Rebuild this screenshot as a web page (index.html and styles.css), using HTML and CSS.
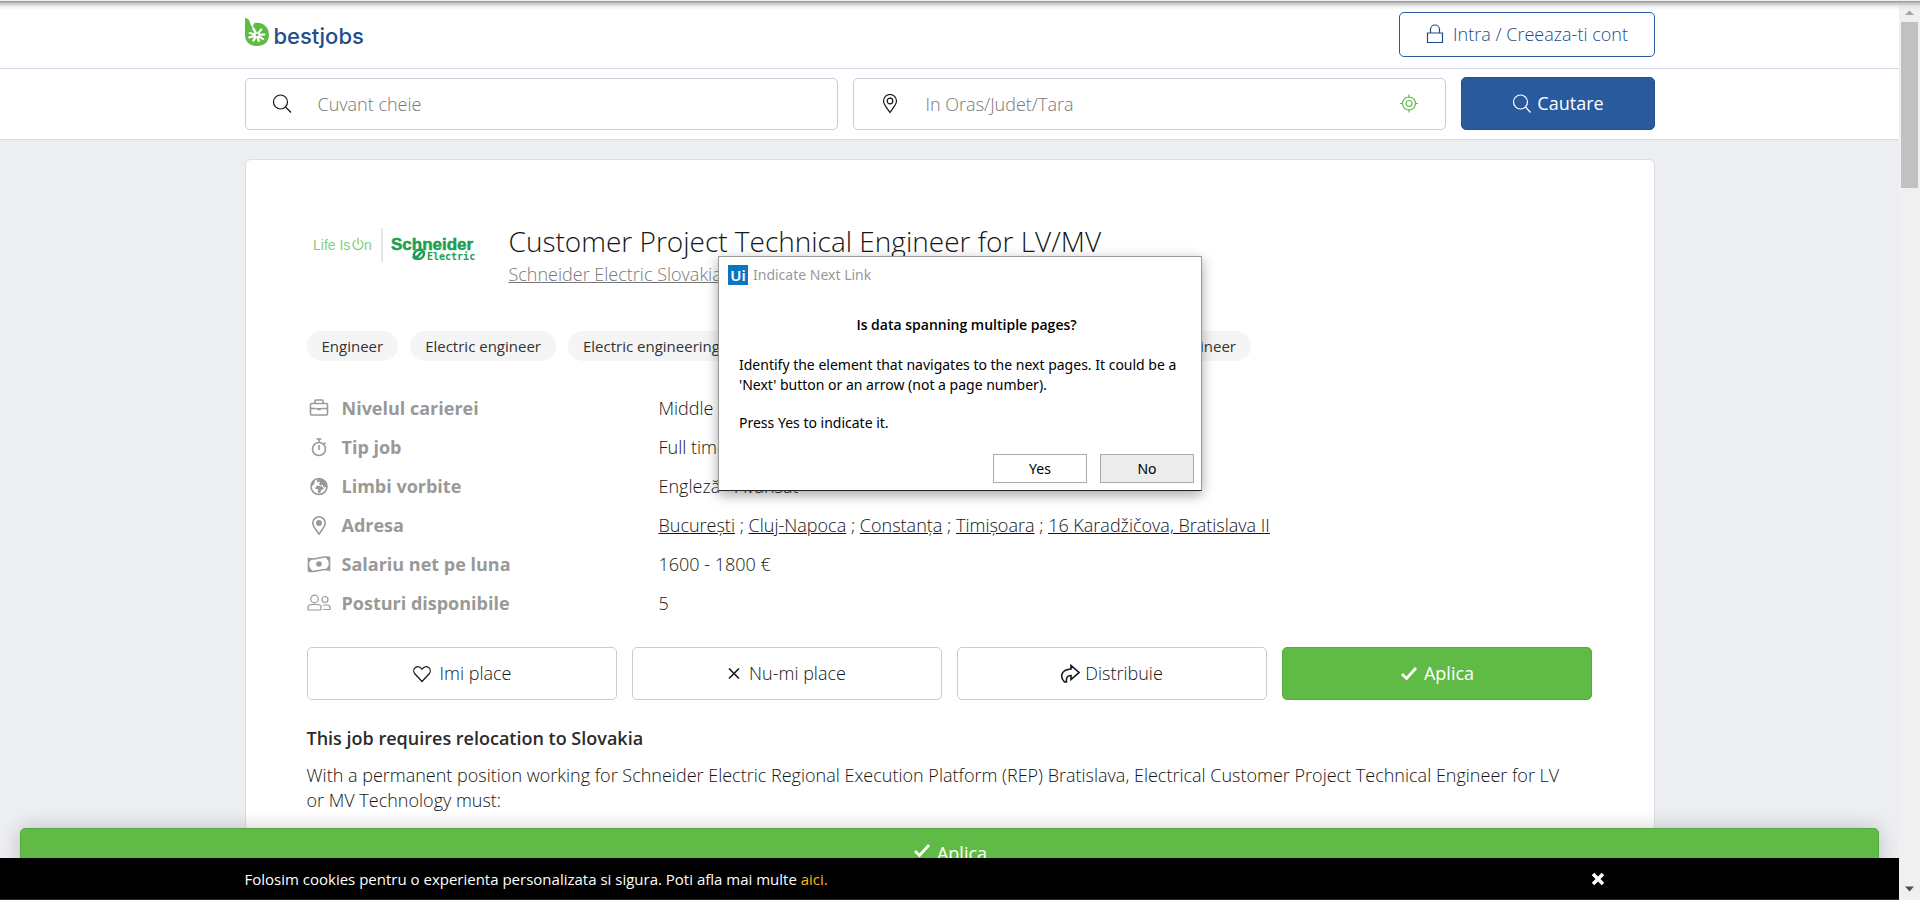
FILE: index.html
```html
<!DOCTYPE html>
<html lang="ro">
<head>
<meta charset="utf-8">
<meta name="viewport" content="width=device-width, initial-scale=1">
<title>Customer Project Technical Engineer for LV/MV - bestjobs</title>
<link rel="stylesheet" href="styles.css">
</head>
<body>
<div class="window">
  <div class="page">
    <header class="header">
      <div class="container header-row">
        <a class="brand" href="#" aria-label="bestjobs">
          <svg class="brand-mark" viewBox="0 0 20 28" preserveAspectRatio="none" aria-hidden="true">
            <path d="M0 0C3 .5 4 3 4.500 6L7.500 12C6.500 9 6.500 6.500 8 5C15 3.500 20 9 20 17C20 24 16 28 10 28C4 28 0 24 0 17Z" fill="#5fbb46"/>
            <g stroke="#fff" stroke-width="2" stroke-linecap="round">
              <path d="M10 17L7 10.500M10 17L13.500 11.500M10 17L16 16.500M10 17L15 21M10 17L11.500 23M10 17L7 22.500M10 17L3.500 19.500M10 17L4 15"/>
            </g>
            <circle cx="10" cy="17" r="1.200" fill="#5fbb46"/>
          </svg>
          <span class="brand-name">bestjobs</span>
        </a>
        <a class="login" href="#">
          <svg class="icon" viewBox="0 0 20 20" aria-hidden="true"><path d="M2.500 9h15v9.500h-15z M5.500 9V5.500a4.500 4.500 0 0 1 9 0V9"/></svg>
          <span>Intra / Creeaza-ti cont</span>
        </a>
      </div>
    </header>

    <form class="search">
      <div class="container search-row">
        <label class="field">
          <svg class="icon" viewBox="0 0 20 20" aria-hidden="true"><circle cx="8.500" cy="8" r="7"/><path d="M13.500 13L19 18.500"/></svg>
          <input type="text" placeholder="Cuvant cheie" aria-label="Cuvant cheie">
        </label>
        <label class="field">
          <svg class="icon" viewBox="0 0 20 20" aria-hidden="true"><path d="M10 18.500C7 14 3.500 10.500 3.500 7a6.500 6.500 0 0 1 13 0C16.500 10.500 13 14 10 18.500z"/><circle cx="10" cy="7" r="2.800"/></svg>
          <input type="text" placeholder="In Oras/Judet/Tara" aria-label="In Oras/Judet/Tara">
          <svg class="icon locate" viewBox="0 0 20 20" aria-hidden="true"><circle cx="10" cy="9.500" r="6.500"/><circle cx="10" cy="9.500" r="3"/><path d="M10 .5v3M10 15.500v3M1 9.500h3M16 9.500h3"/></svg>
        </label>
        <button class="search-btn" type="button">
          <svg class="icon" viewBox="0 0 20 20" aria-hidden="true"><circle cx="9.500" cy="8" r="7"/><path d="M14.500 13L19.500 18.500"/></svg>
          <span>Cautare</span>
        </button>
      </div>
    </form>

    <main class="container card">
      <div class="job-head">
        <svg class="company-logo" viewBox="0 0 170 40" role="img" aria-label="Life Is On | Schneider Electric">
          <text x="0" y="22" class="logo-life">Life Is</text>
          <path d="M42.500 12.200a5 5 0 1 0 5 0M45 9.500v7" fill="none" stroke="#7fd07f" stroke-width="1.300"/>
          <text x="51" y="22" class="logo-life">n</text>
          <path d="M69 0v34" stroke="#dedede" stroke-width="1.500"/>
          <text x="78" y="22" class="logo-name">Schneider</text>
          <text x="114" y="32" class="logo-sub">Electric</text>
          <g fill="none" stroke="#1d9d50" stroke-width="2.400"><path d="M110 22c-5-1-8 1-9 4s3 4 5 1 5-5 5-2-2 6-5 6-5 0-6-3"/></g>
        </svg>
        <div>
          <h1 class="job-title">Customer Project Technical Engineer for LV/MV</h1>
          <a class="company" href="#">Schneider Electric Slovakia</a>
        </div>
      </div>

      <ul class="tags">
        <li>Engineer</li>
        <li>Electric engineer</li>
        <li>Electric engineering</li>
        <li>Technical engineer</li>
        <li>Project engineer</li>
        <li>Mechanical engineer</li>
      </ul>

      <dl class="facts">
        <dt><svg class="icon fact-icon" viewBox="0 0 24 20" aria-hidden="true"><rect x="3.500" y="4.500" width="17" height="11.500" rx="1"/><path d="M8 4V2q0-1 1-1h6q1 0 1 1v2M3.500 9.500h6M14.500 9.500h6"/><path d="M9.500 9h5v1.500l-2.500 1-2.500-1z" fill="currentColor" stroke="none"/></svg>Nivelul carierei</dt>
        <dd>Middle</dd>
        <dt><svg class="icon fact-icon" viewBox="0 0 24 20" aria-hidden="true"><circle cx="12" cy="11" r="6.500"/><path d="M12 7v5M9.500 1h5M12 1v4M17 4.500l1.500 1.500"/></svg>Tip job</dt>
        <dd>Full time</dd>
        <dt><svg class="icon fact-icon" viewBox="0 0 24 20" aria-hidden="true"><circle cx="12" cy="9.500" r="8"/><path d="M10 2.500l4-1 4 3 2 5-2 1-2-1 0-2-2 1-2-1 1-3-3 1zM10 8.500l5 1 2 2-3 2-1 3-2-1 0-3-3-1zM5 4.500l3-1-1 4-3 2z" fill="currentColor" stroke="none"/></svg>Limbi vorbite</dt>
        <dd>Engleză - Avansat</dd>
        <dt><svg class="icon fact-icon" viewBox="0 0 24 20" aria-hidden="true"><path d="M12 18C9 13.500 5.800 10.500 5.800 7a6.200 6.200 0 0 1 12.400 0C18.200 10.500 15 13.500 12 18z"/><circle cx="12" cy="7" r="3" fill="currentColor" stroke="none"/></svg>Adresa</dt>
        <dd><a href="#">București</a> ; <a href="#">Cluj-Napoca</a> ; <a href="#">Constanța</a> ; <a href="#">Timișoara</a> ; <a href="#">16 Karadžičova, Bratislava II</a></dd>
        <dt><svg class="icon fact-icon" viewBox="0 0 24 20" aria-hidden="true"><path d="M1.500 3.500c7 2.500 14-3.500 21-1v12.500c-7-2.500-14 3.500-21 1z"/><circle cx="12" cy="9" r="2.800" fill="currentColor" stroke="none"/><path d="M2 4h2l-2 2zM22 2.500h-2l2 3zM2 15.500h2l-2-3zM22 14.500h-2l2-3z" fill="currentColor"/></svg>Salariu net pe luna</dt>
        <dd>1600 - 1800 €</dd>
        <dt><svg class="icon fact-icon thin" viewBox="0 0 24 20" aria-hidden="true"><circle cx="7.500" cy="5" r="3.800"/><circle cx="18" cy="5.500" r="3"/><path d="M1 16v-2.500q0-3 3-3h7q3 0 3 3V16zM15.500 11h4.500q3 0 3 2.500V15.500h-7"/></svg>Posturi disponibile</dt>
        <dd>5</dd>
      </dl>

      <div class="actions">
        <button class="action" type="button"><svg class="icon" viewBox="0 0 20 20" aria-hidden="true"><path d="M10 17.500L2.600 9.500C-.5 5 5.500-.5 10 5.200 14.500-.5 20.500 5 17.400 9.500z"/></svg><span>Imi place</span></button>
        <button class="action" type="button"><svg class="icon small" viewBox="0 0 14 20" aria-hidden="true"><path d="M2 4.500l10 10M12 4.500l-10 10"/></svg><span>Nu-mi place</span></button>
        <button class="action tight" type="button"><svg class="icon bold" viewBox="0 0 20 20" aria-hidden="true"><path d="M11 5V1.500L19 8.500l-8 7v-4C7.500 11.500 6 13 6.500 18H4.500C-.5 13 1 5.500 11 5z"/></svg><span>Distribuie</span></button>
        <button class="action apply" type="button"><svg class="icon check" viewBox="0 0 20 20" aria-hidden="true"><path d="M3 10l4.500 4.500L17 4"/></svg><span>Aplica</span></button>
      </div>

      <div class="description">
        <p><strong>This job requires relocation to Slovakia</strong></p>
        <p>With a permanent position working for Schneider Electric Regional Execution Platform (REP) Bratislava, Electrical Customer Project Technical Engineer for LV or MV Technology must:</p>
      </div>
    </main>

    <div class="bottom">
      <button class="sticky-apply" type="button"><svg class="icon check" viewBox="0 0 20 20" aria-hidden="true"><path d="M3 10l4.500 4.500L17 4"/></svg><span>Aplica</span></button>
      <div class="cookies">
        <div class="container cookies-row">
          <p>Folosim cookies pentru o experienta personalizata si sigura. Poti afla mai multe <a href="#">aici.</a></p>
          <button class="cookies-close" type="button" aria-label="Inchide"><svg viewBox="0 0 14 14" aria-hidden="true"><path d="M2 2l10 10M12 2L2 12"/></svg></button>
        </div>
      </div>
    </div>
  </div>

  <div class="scrollbar" aria-hidden="true">
    <svg class="arrow" viewBox="0 0 17 17"><path d="M4 10.500h9L8.500 6z" fill="#a3a3a3"/></svg>
    <div class="thumb"></div>
    <svg class="arrow end" viewBox="0 0 17 17"><path d="M4 6h9l-4.500 5z" fill="#505050"/></svg>
  </div>

  <section class="dialog" role="dialog" aria-labelledby="dialog-title">
    <div class="dialog-bar">
      <span class="dialog-icon" aria-hidden="true">Ui</span>
      <span id="dialog-title">Indicate Next Link</span>
    </div>
    <div class="dialog-body">
      <h2>Is data spanning multiple pages?</h2>
      <p>Identify the element that navigates to the next pages. It could be a 'Next' button or an arrow (not a page number).</p>
      <p>Press Yes to indicate it.</p>
    </div>
    <div class="dialog-actions">
      <button type="button">Yes</button>
      <button class="default" type="button">No</button>
    </div>
  </section>
</div>
</body>
</html>
```
FILE: styles.css
```css
* { box-sizing: border-box; }

body {
  margin: 0;
  background: #edeef2;
  color: #151515;
  font: 300 18px/25px "Open Sans", "Noto Sans", sans-serif;
}

h1, h2, p, ul, dl, dd { margin: 0; padding: 0; }
button, input { font: inherit; color: inherit; }
button { cursor: pointer; }
strong { color: #2b2b2b; font-weight: 600; }

.window {
  position: relative;
  display: flex;
  height: 100vh;
  overflow: hidden;
}
.window::before {
  content: "";
  position: absolute;
  inset: 0 0 auto;
  height: 9px;
  border-top: 1px solid #f1f1f1;
  background: linear-gradient(#8b908b, #bdbdbd 20%, rgba(220, 220, 220, .5) 60%, transparent);
  z-index: 3;
}

.page {
  position: relative;
  flex: 1;
  min-width: 0;
  overflow: hidden;
}
.container {
  width: calc(100% - 40px);
  max-width: 1410px;
  margin: 0 auto;
}

.icon {
  width: 20px;
  height: 20px;
  flex: none;
  fill: none;
  stroke: currentColor;
  stroke-width: 1.200;
}
.icon.bold { stroke-width: 1.600; }
.icon.small { width: 14px; stroke-width: 1.600; }
.icon.check { stroke-width: 2.800; }

/* Header */
.header { background: #fff; border-bottom: 1px solid #d5daec; }
.header-row {
  display: flex;
  align-items: center;
  justify-content: space-between;
  height: 68px;
}
.brand {
  display: flex;
  gap: 5px;
  padding-top: 4px;
  color: #224e8c;
  text-decoration: none;
}
.brand-mark { width: 24px; height: 28px; }
.brand-name { font: 500 22px/36px Inter, sans-serif; }
.login {
  display: flex;
  align-items: center;
  justify-content: center;
  gap: 8px;
  width: 256px;
  height: 45px;
  border: 1px solid #2a5a9e;
  border-radius: 5px;
  color: #1d4b8c;
  text-decoration: none;
}

/* Search */
.search { background: #fff; border-bottom: 1px solid #d9dce8; }
.search-row {
  display: grid;
  grid-template-columns: 1fr 1fr 194px;
  gap: 15px;
  padding: 8px 0 9px;
}
.field {
  display: flex;
  align-items: center;
  gap: 26px;
  height: 52px;
  margin-top: 1px;
  padding: 0 26px;
  border: 1px solid #ccc;
  border-radius: 5px;
}
.field input {
  flex: 1;
  min-width: 0;
  padding: 0;
  border: 0;
  outline: 0;
  background: none;
}
.field input::placeholder { color: #777; opacity: 1; }
.locate { color: #5fbb46; }
.search-btn {
  display: flex;
  align-items: center;
  justify-content: center;
  gap: 6px;
  border: 1px solid #24508e;
  border-radius: 5px;
  background: #2a5a9e;
  color: #fff;
  font-weight: 400;
}

/* Job card */
.card {
  min-height: 100vh;
  margin-top: 19px;
  padding: 60px 62px 60px 61px;
  border: 1px solid #dcdde1;
  border-radius: 6px;
  background: #fff;
}
.job-head { display: flex; gap: 26px; padding-left: 6px; }
.company-logo { width: 170px; height: 40px; margin-top: 8px; }
.logo-life { font: 14px "Liberation Sans", sans-serif; fill: #7fd07f; }
.logo-name { font: bold 17px "Liberation Sans", sans-serif; fill: #1d9d50; stroke: #1d9d50; stroke-width: .5; }
.logo-sub { font: bold 10px "DejaVu Sans Mono", monospace; fill: #1d9d50; }
.job-title { font-size: 28px; line-height: 42px; font-weight: 300; }
.company { color: #777; }

.tags {
  display: flex;
  gap: 12px;
  margin-top: 44px;
  color: #333;
  list-style: none;
  font-size: 15px;
  font-weight: 400;
  line-height: 30px;
}
.tags li {
  padding: 0 15px;
  border-radius: 15px;
  background: #f5f5f5;
  white-space: nowrap;
}

.facts {
  display: grid;
  grid-template-columns: 352px 1fr;
  grid-auto-rows: 39px;
  align-items: center;
  margin-top: 28px;
}
.facts dt {
  display: flex;
  align-items: center;
  gap: 11px;
  color: #999;
  font-weight: 700;
}
.fact-icon { width: 24px; stroke-width: 1.600; }
.fact-icon.thin { stroke-width: 1.200; }
.facts a { color: inherit; }

.actions {
  display: grid;
  grid-template-columns: repeat(4, 1fr);
  gap: 15px;
  margin-top: 24px;
}
.action {
  display: flex;
  align-items: center;
  justify-content: center;
  gap: 8px;
  height: 53px;
  border: 1px solid #ccc;
  border-radius: 5px;
  background: #fff;
}
.action.tight { gap: 5px; }
.action.apply { gap: 5px; border-color: #56a840; background: #5fbb46; color: #fff; font-weight: 400; }

.description { margin-top: 26px; padding-right: 16px; }
.description p { margin-bottom: 12px; }

/* Bars pinned over the page */
.bottom { position: absolute; inset: auto 0 0; }
.sticky-apply {
  display: flex;
  justify-content: center;
  gap: 5px;
  width: calc(100% - 40px);
  height: 53px;
  margin: 0 20px -23px;
  padding: 12px 0;
  border: 1px solid #56a840;
  border-radius: 5px;
  background: #5fbb46;
  color: #fff;
  font-weight: 400;
  box-shadow: 0 0 20px rgba(0, 0, 0, .2);
}
.cookies {
  position: relative;
  border-bottom: 1px solid #2b2b33;
  background: #000;
  color: #fff;
  font-size: 15px;
  font-weight: 400;
}
.cookies-row {
  display: flex;
  align-items: center;
  justify-content: space-between;
  height: 41px;
  padding: 1px 50px 0 0;
}
.cookies a { color: #fdb813; text-decoration: none; }
.cookies-close { padding: 0; border: 0; background: none; line-height: 0; }
.cookies-close svg { width: 14px; height: 14px; stroke: #fff; stroke-width: 3.500; }

/* Window scrollbar */
.scrollbar {
  display: flex;
  flex-direction: column;
  width: 21px;
  padding: 4px 2px 2px;
  background: #f0f0f0;
}
.arrow { width: 17px; height: 18px; }
.arrow.end { margin-top: auto; }
.thumb { height: 166px; background: #c1c1c1; }

/* System dialog */
.dialog {
  position: absolute;
  top: 256px;
  left: 718px;
  width: 484px;
  padding: 8px 7px 7px 9px;
  border: 1px solid #999;
  border-bottom-color: #222;
  background: #fff;
  color: #000;
  font: 14px/20px "Noto Sans", sans-serif;
  box-shadow: 0 4px 12px rgba(0, 0, 0, .35);
  z-index: 4;
}
.dialog-bar { display: flex; align-items: center; gap: 5px; color: #999; }
.dialog-icon {
  width: 20px;
  height: 20px;
  background: #0b75c2;
  color: #fff;
  font-size: 15px;
  font-weight: 600;
  text-align: center;
}
.dialog-body { padding: 30px 0 21px 11px; }
.dialog-body h2 {
  margin-bottom: 20px;
  font: 600 14px/20px "Open Sans", sans-serif;
  text-align: center;
}
.dialog-body p + p { margin-top: 18px; }
.dialog-actions { display: flex; justify-content: flex-end; gap: 13px; }
.dialog-actions button {
  width: 94px;
  height: 29px;
  padding: 0;
  border: 1px solid #aaa;
  background: #fff;
}
.dialog-actions .default { background: #ececec; }
```
